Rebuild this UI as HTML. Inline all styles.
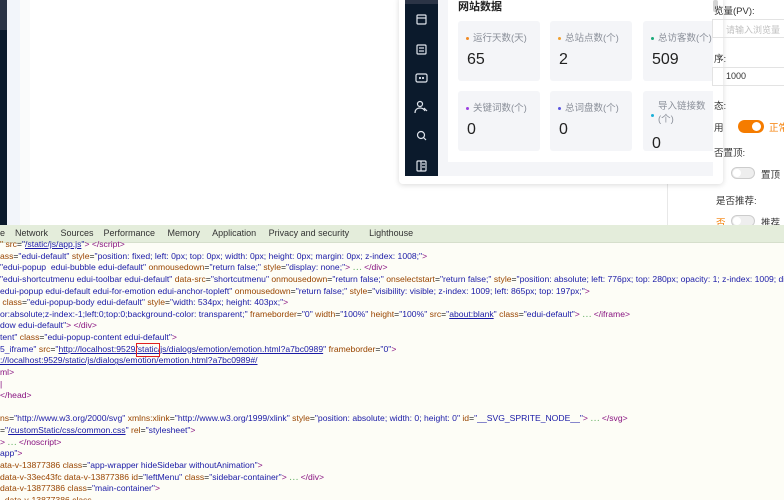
<!DOCTYPE html>
<html><head><meta charset="utf-8"><style>
*{margin:0;padding:0;box-sizing:border-box}
html,body{width:784px;height:500px;overflow:hidden}
body{background:#fff;font-family:"Liberation Sans","Noto Sans CJK SC",sans-serif;position:relative}
.a{position:absolute}
.dt{font-size:8.6px;line-height:11.62px;white-space:pre;color:#222;}
.t{color:#881280}.n{color:#994500}.v{color:#1a1aa6}.u{text-decoration:underline;color:#1a1aa6}
.card{position:absolute;background:#f4f5f8;border-radius:3px;width:82px;height:60px}
.card .l{position:absolute;left:8px;top:9px;font-size:9.5px;color:#8a8f99;white-space:nowrap}
.card .l i{display:inline-block;width:3px;height:3px;border-radius:50%;margin-right:4px;vertical-align:middle}
.card .num{position:absolute;left:9px;top:30px;font-size:16px;color:#222}
.fl{position:absolute;left:714px;font-size:9.5px;color:#333;white-space:nowrap}
.sw{position:absolute;width:24px;height:12px;border-radius:6px;border:1px solid #ccc;background:#eee}
.sw::after{content:"";position:absolute;left:1px;top:1px;width:8px;height:8px;border-radius:50%;background:#fff}
</style></head><body>
<div class="a" style="left:0;top:0;width:7px;height:225px;background:#0b1a2c"></div>
<div class="a" style="left:0;top:0;width:7px;height:30px;background:#2b3446"></div>
<div class="a" style="left:7px;top:0;width:13px;height:225px;background:#f2f5fa"></div>
<div class="a" style="left:20px;top:0;width:10px;height:225px;background:#fafbfb"></div>
<div class="a" style="left:667px;top:0;width:1px;height:225px;background:#e8e8e8"></div>

<div class="a" style="left:399px;top:-4px;width:324px;height:188px;background:#fff;border-radius:4px;box-shadow:0 1px 6px rgba(0,0,0,.15)"></div>
<div class="a" style="left:405px;top:0;width:33px;height:176px;background:#0b1a2c"></div>
<div class="a" style="left:405px;top:0;width:33px;height:4px;background:#2b3446"></div>
<svg class="a" style="left:405px;top:0" width="33" height="176" fill="none" stroke="#dfe4ec" stroke-width="1.2">
<rect x="12" y="15" width="9" height="9" rx="1"/><line x1="12" y1="18" x2="21" y2="18"/>
<rect x="12" y="45" width="9" height="9" rx="1"/><line x1="14" y1="48" x2="19" y2="48"/><line x1="14" y1="51" x2="19" y2="51"/>
<rect x="11" y="74" width="11" height="8" rx="1.5"/><circle cx="15" cy="78" r=".5"/><circle cx="18" cy="78" r=".5"/>
<circle cx="15" cy="104" r="2.5"/><path d="M10 113c0-4 3-5 5-5s4 1 5 3M19 108l3 3"/>
<circle cx="16" cy="135" r="3.5"/><line x1="18.5" y1="137.5" x2="21" y2="140"/>
<rect x="12" y="161" width="9" height="10" rx="1"/><line x1="16" y1="161" x2="16" y2="171"/><line x1="17" y1="164" x2="20" y2="164"/><line x1="17" y1="167" x2="20" y2="167"/>
</svg>
<div class="a" style="left:438px;top:0;width:275px;height:176px;background:#f4f5f8"></div>
<div class="a" style="left:448px;top:0;width:265px;height:162px;background:#fff"></div>
<div class="a" style="left:713px;top:0;width:5px;height:12px;background:#d4d4d4;border-radius:2px"></div>
<div class="a" style="left:458px;top:-2px;font-size:11px;font-weight:bold;color:#222">网站数据</div>
<div style="position:absolute;left:0;top:0;width:713px;height:176px;overflow:hidden">
<div class="card" style="left:458px;top:21px"><div class="l"><i style="background:#f08a24"></i>运行天数(天)</div><div class="num">65</div></div>
<div class="card" style="left:550px;top:21px"><div class="l"><i style="background:#f0a030"></i>总站点数(个)</div><div class="num">2</div></div>
<div class="card" style="left:643px;top:21px"><div class="l"><i style="background:#19a979"></i>总访客数(个)</div><div class="num">509</div></div>
<div class="card" style="left:458px;top:91px"><div class="l"><i style="background:#9b3fe0"></i>关键词数(个)</div><div class="num">0</div></div>
<div class="card" style="left:550px;top:91px"><div class="l"><i style="background:#5a55e0"></i>总词盘数(个)</div><div class="num">0</div></div>
<div class="card" style="left:643px;top:91px"><div class="l" style="line-height:13px;padding-left:7px;width:60px;white-space:normal"><i style="background:#1cb0d8;position:absolute;left:0;top:14px"></i>导入链接数<br>(个)</div><div class="num" style="top:44px">0</div></div>
</div>

<div class="fl" style="top:3px">览量(PV):</div>
<div class="a" style="left:712px;top:19px;width:80px;height:19px;border:1px solid #e3e3e3"></div>
<div class="fl" style="top:23px;left:726px;color:#c0c0c0;font-size:9px">请输入浏览量</div>
<div class="fl" style="top:51px">序:</div>
<div class="a" style="left:712px;top:67px;width:80px;height:19px;border:1px solid #e3e3e3"></div>
<div class="fl" style="top:71px;left:726px;font-size:9px">1000</div>
<div class="fl" style="top:98px">态:</div>
<div class="fl" style="top:120px">用</div>
<div class="a" style="left:738px;top:120px;width:26px;height:13px;border-radius:7px;background:#f57c00"></div>
<div class="a" style="left:752px;top:122px;width:9px;height:9px;border-radius:50%;background:#fff"></div>
<div class="fl" style="top:120px;left:769px;color:#f57c00">正常</div>
<div class="fl" style="top:145px">否置顶:</div>
<div class="sw" style="left:731px;top:167px"></div>
<div class="fl" style="top:167px;left:761px">置顶</div>
<div class="fl" style="top:193px;left:716px">是否推荐:</div>
<div class="fl" style="top:215px;left:716px;color:#f57c00">否</div>
<div class="sw" style="left:731px;top:215px"></div>
<div class="fl" style="top:215px;left:761px">推荐</div>

<div class="a" style="left:0;top:225px;width:784px;height:18px;background:#e4eddb;border-bottom:1px solid #d6dfcc"></div>
<div class="a dt" style="top:228px;left:0;font-size:9px;color:#333">e    Network     Sources    Performance     Memory     Application     Privacy and security        Lighthouse</div>
<div class="a" style="left:0;top:243px;width:784px;height:257px;background:#fdfdf6"></div>
<div class="a dt" style="left:0;top:239px;width:784px;height:261px;overflow:hidden"><span class="n">"</span> <span class="n">src</span>=<span class="v">"</span><span class="u">/static/js/app.js</span><span class="v">"</span><span class="t">&gt; &lt;/script&gt;</span>
<span class="n">ass</span>=<span class="v">"edui-default"</span> <span class="n">style</span>=<span class="v">"position: fixed; left: 0px; top: 0px; width: 0px; height: 0px; margin: 0px; z-index: 1008;"</span><span class="t">&gt;</span>
<span class="v">"edui-popup  edui-bubble edui-default"</span> <span class="n">onmousedown</span>=<span class="v">"return false;"</span> <span class="n">style</span>=<span class="v">"display: none;"</span><span class="t">&gt;</span> <span style="color:#5a5">⋯</span> <span class="t">&lt;/div&gt;</span>
<span class="v">"edui-shortcutmenu edui-toolbar edui-default"</span> <span class="n">data-src</span>=<span class="v">"shortcutmenu"</span> <span class="n">onmousedown</span>=<span class="v">"return false;"</span> <span class="n">onselectstart</span>=<span class="v">"return false;"</span> <span class="n">style</span>=<span class="v">"position: absolute; left: 776px; top: 280px; opacity: 1; z-index: 1009; display: none;"</span><span class="t">&gt;</span>
<span class="v">edui-popup edui-default edui-for-emotion edui-anchor-topleft"</span> <span class="n">onmousedown</span>=<span class="v">"return false;"</span> <span class="n">style</span>=<span class="v">"visibility: visible; z-index: 1009; left: 865px; top: 197px;"</span><span class="t">&gt;</span>
 <span class="n">class</span>=<span class="v">"edui-popup-body edui-default"</span> <span class="n">style</span>=<span class="v">"width: 534px; height: 403px;"</span><span class="t">&gt;</span>
<span class="v">or:absolute;z-index:-1;left:0;top:0;background-color: transparent;"</span> <span class="n">frameborder</span>=<span class="v">"0"</span> <span class="n">width</span>=<span class="v">"100%"</span> <span class="n">height</span>=<span class="v">"100%"</span> <span class="n">src</span>=<span class="v">"</span><span class="u">about:blank</span><span class="v">"</span> <span class="n">class</span>=<span class="v">"edui-default"</span><span class="t">&gt;</span> <span style="color:#5a5">⋯</span> <span class="t">&lt;/iframe&gt;</span>
<span class="v">dow edui-default"</span><span class="t">&gt; &lt;/div&gt;</span>
<span class="v">tent"</span> <span class="n">class</span>=<span class="v">"edui-popup-content edui-default"</span><span class="t">&gt;</span>
<span class="v">5_iframe"</span> <span class="n">src</span>=<span class="v">"</span><span class="u">http://localhost:9529/static/js/dialogs/emotion/emotion.html?a7bc0989</span><span class="v">"</span> <span class="n">frameborder</span>=<span class="v">"0"</span><span class="t">&gt;</span>
<span class="u">://localhost:9529/static/js/dialogs/emotion/emotion.html?a7bc0989#/</span>
<span class="t">ml&gt;</span>
<span class="t">|</span>
<span class="t">&lt;/head&gt;</span>

<span class="n">ns</span>=<span class="v">"http://www.w3.org/2000/svg"</span> <span class="n">xmlns:xlink</span>=<span class="v">"http://www.w3.org/1999/xlink"</span> <span class="n">style</span>=<span class="v">"position: absolute; width: 0; height: 0"</span> <span class="n">id</span>=<span class="v">"__SVG_SPRITE_NODE__"</span><span class="t">&gt;</span> <span style="color:#5a5">⋯</span> <span class="t">&lt;/svg&gt;</span>
=<span class="v">"</span><span class="u">/customStatic/css/common.css</span><span class="v">"</span> <span class="n">rel</span>=<span class="v">"stylesheet"</span><span class="t">&gt;</span>
<span class="t">&gt;</span> <span style="color:#5a5">⋯</span> <span class="t">&lt;/noscript&gt;</span>
<span class="v">app"</span><span class="t">&gt;</span>
<span class="n">ata-v-13877386</span> <span class="n">class</span>=<span class="v">"app-wrapper hideSidebar withoutAnimation"</span><span class="t">&gt;</span>
<span class="n">data-v-33ec43fc data-v-13877386</span> <span class="n">id</span>=<span class="v">"leftMenu"</span> <span class="n">class</span>=<span class="v">"sidebar-container"</span><span class="t">&gt;</span> <span style="color:#5a5">⋯</span> <span class="t">&lt;/div&gt;</span>
<span class="n">data-v-13877386</span> <span class="n">class</span>=<span class="v">"main-container"</span><span class="t">&gt;</span>
<span class="n">  data-v-13877386 class</span></div>
<div class="a" style="left:136px;top:343px;width:24px;height:14px;border:1.5px solid #e02020"></div>
</body></html>
